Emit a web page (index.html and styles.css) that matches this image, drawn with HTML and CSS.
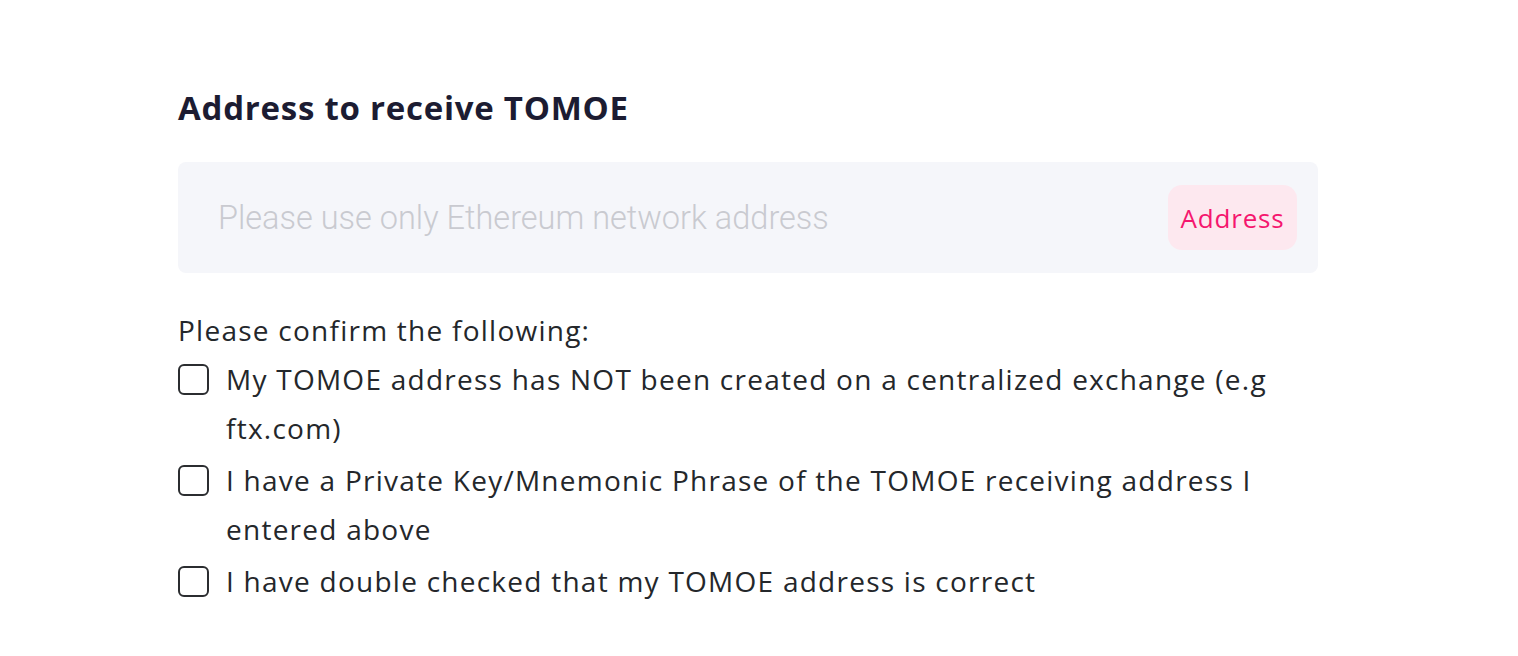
FILE: index.html
```html
<!DOCTYPE html>
<html>
<head>
<meta charset="utf-8">
<link rel="stylesheet" href="styles.css">
</head>
<body>
<main class="page">
  <section class="form">
    <h2 class="title">Address to receive TOMOE</h2>
    <div class="field">
      <input class="field-input" type="text" placeholder="Please use only Ethereum network address">
      <button class="field-btn" type="button">Address</button>
    </div>
    <p class="confirm-title">Please confirm the following:</p>
    <ul class="checks">
      <li class="check"><span class="box"></span><span class="check-text">My TOMOE address has NOT been created on a centralized exchange (e.g ftx.com)</span></li>
      <li class="check"><span class="box"></span><span class="check-text">I have a Private Key/Mnemonic Phrase of the TOMOE receiving address I entered above</span></li>
      <li class="check"><span class="box"></span><span class="check-text">I have double checked that my TOMOE address is correct</span></li>
    </ul>
  </section>
</main>
</body>
</html>
```

FILE: styles.css
```css
html, body {
  margin: 0;
  padding: 0;
  background: #ffffff;
}
.page {
  padding: 88px 0 0 178px;
}
.form {
  width: 1140px;
  font-family: "Open Sans", "Noto Sans", sans-serif;
}
.title {
  margin: 0;
  font-size: 33px;
  line-height: 40px;
  letter-spacing: 0.75px;
  font-weight: 700;
  color: #1c1c32;
}
.field {
  margin-top: 34px;
  height: 111px;
  background: #f5f6fa;
  border-radius: 8px;
  display: flex;
  align-items: center;
  padding: 0 21px 0 40px;
  box-sizing: border-box;
}
.field-input {
  flex: 1;
  border: none;
  outline: none;
  background: transparent;
  font-family: "Roboto", sans-serif;
  font-weight: 300;
  font-size: 32.5px;
  color: #222;
  padding: 0;
}
.field-input::placeholder {
  color: #c9cad0;
}
.field-btn {
  width: 129px;
  height: 65px;
  border: none;
  border-radius: 14px;
  background: #fde8ef;
  color: #f5166e;
  font-family: "Open Sans", sans-serif;
  font-size: 26px;
  letter-spacing: 0.8px;
  padding: 0;
}
.confirm-title {
  margin: 33px 0 0;
  font-size: 28px;
  line-height: 48px;
  letter-spacing: 1.25px;
  color: #24272b;
}
.checks {
  list-style: none;
  margin: 1px 0 0;
  padding: 0;
}
.check {
  display: flex;
  align-items: flex-start;
  margin-bottom: 3px;
}
.box {
  flex: none;
  width: 27px;
  height: 27px;
  border: 2px solid #2b2d30;
  border-radius: 6px;
  margin-top: 9px;
  margin-right: 17px;
}
.check-text {
  font-size: 28px;
  line-height: 49px;
  letter-spacing: 1.25px;
  color: #24272b;
  max-width: 1092px;
}
```
